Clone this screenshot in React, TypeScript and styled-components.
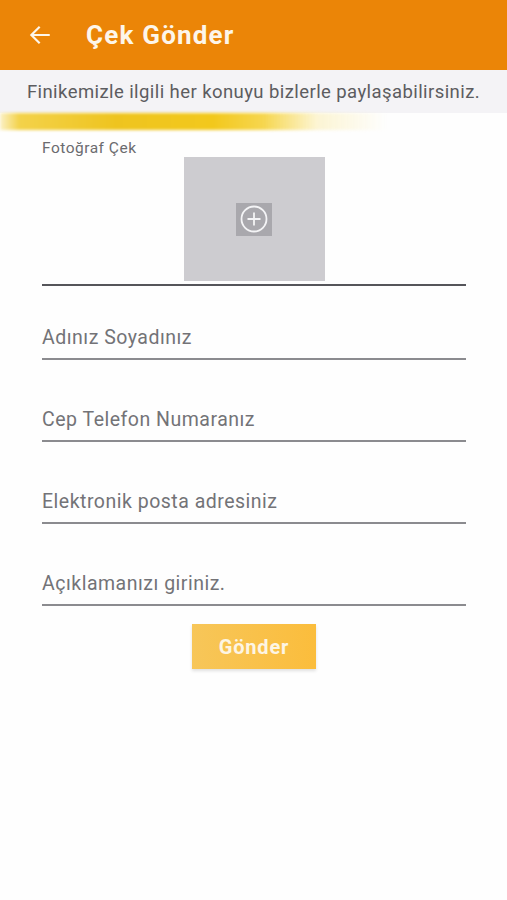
import React from "react";
import styled, { createGlobalStyle } from "styled-components";

const GlobalStyle = createGlobalStyle`
  html, body {
    margin: 0;
    padding: 0;
    background: #fefefe;
  }
  body {
    font-family: Roboto, "Noto Sans", "Liberation Sans", sans-serif;
  }
`;

const Screen = styled.div`
  width: 507px;
  min-height: 900px;
  background: #fefefe;
  display: flex;
  flex-direction: column;
`;

const AppBar = styled.header`
  height: 70px;
  background: #eb8507;
  display: flex;
  align-items: center;
  padding: 0 0 0 26px;
  box-sizing: border-box;
`;

const BackButton = styled.button`
  border: 0;
  background: transparent;
  padding: 0;
  width: 28px;
  height: 28px;
  display: flex;
  align-items: center;
  justify-content: center;
  margin-right: 32px;
`;

const Title = styled.h1`
  margin: 0;
  color: #fdf6ea;
  font-size: 26px;
  font-weight: 700;
  letter-spacing: 1.2px;
`;

const Notice = styled.div`
  height: 43px;
  background: #f4f3f6;
  display: flex;
  align-items: center;
  justify-content: center;
  color: #5c5c60;
  font-size: 18.5px;
  letter-spacing: 0.42px;
`;

const Glow = styled.div`
  height: 17px;
  margin-right: 120px;
  background: linear-gradient(
    90deg,
    #fbf1c6 0%,
    #f3d24a 5%,
    #eec41f 30%,
    #f2c81c 55%,
    #f6d64e 68%,
    rgba(250, 236, 170, 0.5) 82%,
    rgba(255, 255, 255, 0) 100%
  );
  filter: blur(1.5px);
`;

const Form = styled.div`
  padding: 9px 41px 0 42px;
  display: flex;
  flex-direction: column;
`;

const PhotoLabel = styled.div`
  font-size: 15.5px;
  letter-spacing: 0.5px;
  color: #6b6b6f;
  height: 18px;
  line-height: 18px;
`;

const PhotoField = styled.div`
  display: flex;
  justify-content: center;
  border-bottom: 2px solid #55555a;
  padding-bottom: 3px;
`;

const PhotoBox = styled.div`
  width: 141px;
  height: 124px;
  background: #cdccd0;
  display: flex;
  align-items: center;
  justify-content: center;
`;

const AddTile = styled.div`
  width: 36px;
  height: 33px;
  background: #a9a8ad;
  display: flex;
  align-items: center;
  justify-content: center;
`;

const Field = styled.div<{ $first?: boolean }>`
  height: ${(p) => (p.$first ? 74 : 82)}px;
  box-sizing: border-box;
  border-bottom: 2px solid #8b8b8f;
  display: flex;
  align-items: flex-end;
  padding-bottom: 9px;
  color: #737377;
  font-size: 19.5px;
  letter-spacing: 0.5px;
`;

const Submit = styled.button`
  align-self: center;
  margin-top: 18px;
  width: 124px;
  height: 45px;
  border: 0;
  background: linear-gradient(90deg, #f7c659 0%, #fbbd3c 100%);
  box-shadow: 0 2px 3px rgba(0, 0, 0, 0.12);
  color: #fdf5e4;
  font-family: Roboto, "Liberation Sans", sans-serif;
  font-size: 20px;
  font-weight: 700;
  letter-spacing: 0.8px;
`;

const fields = [
  "Adınız Soyadınız",
  "Cep Telefon Numaranız",
  "Elektronik posta adresiniz",
  "Açıklamanızı giriniz.",
];

export default function App(): JSX.Element {
  return (
    <Screen>
      <GlobalStyle />
      <AppBar>
        <BackButton aria-label="Geri">
          <svg width="26" height="26" viewBox="0 0 24 24" fill="none">
            <path
              d="M20 12H4.5M11 5l-7 7 7 7"
              stroke="#fdf6ea"
              strokeWidth="2"
              strokeLinecap="square"
            />
          </svg>
        </BackButton>
        <Title>Çek Gönder</Title>
      </AppBar>
      <Notice>Finikemizle ilgili her konuyu bizlerle paylaşabilirsiniz.</Notice>
      <Glow />
      <Form>
        <PhotoLabel>Fotoğraf Çek</PhotoLabel>
        <PhotoField>
          <PhotoBox>
            <AddTile>
              <svg width="30" height="30" viewBox="0 0 30 30" fill="none">
                <circle cx="15" cy="15" r="12.5" stroke="#f4f4f6" strokeWidth="1.8" />
                <path d="M15 8.5v13M8.5 15h13" stroke="#f4f4f6" strokeWidth="1.8" />
              </svg>
            </AddTile>
          </PhotoBox>
        </PhotoField>
        {fields.map((f, i) => (
          <Field key={f} $first={i === 0}>
            {f}
          </Field>
        ))}
        <Submit>Gönder</Submit>
      </Form>
    </Screen>
  );
}
